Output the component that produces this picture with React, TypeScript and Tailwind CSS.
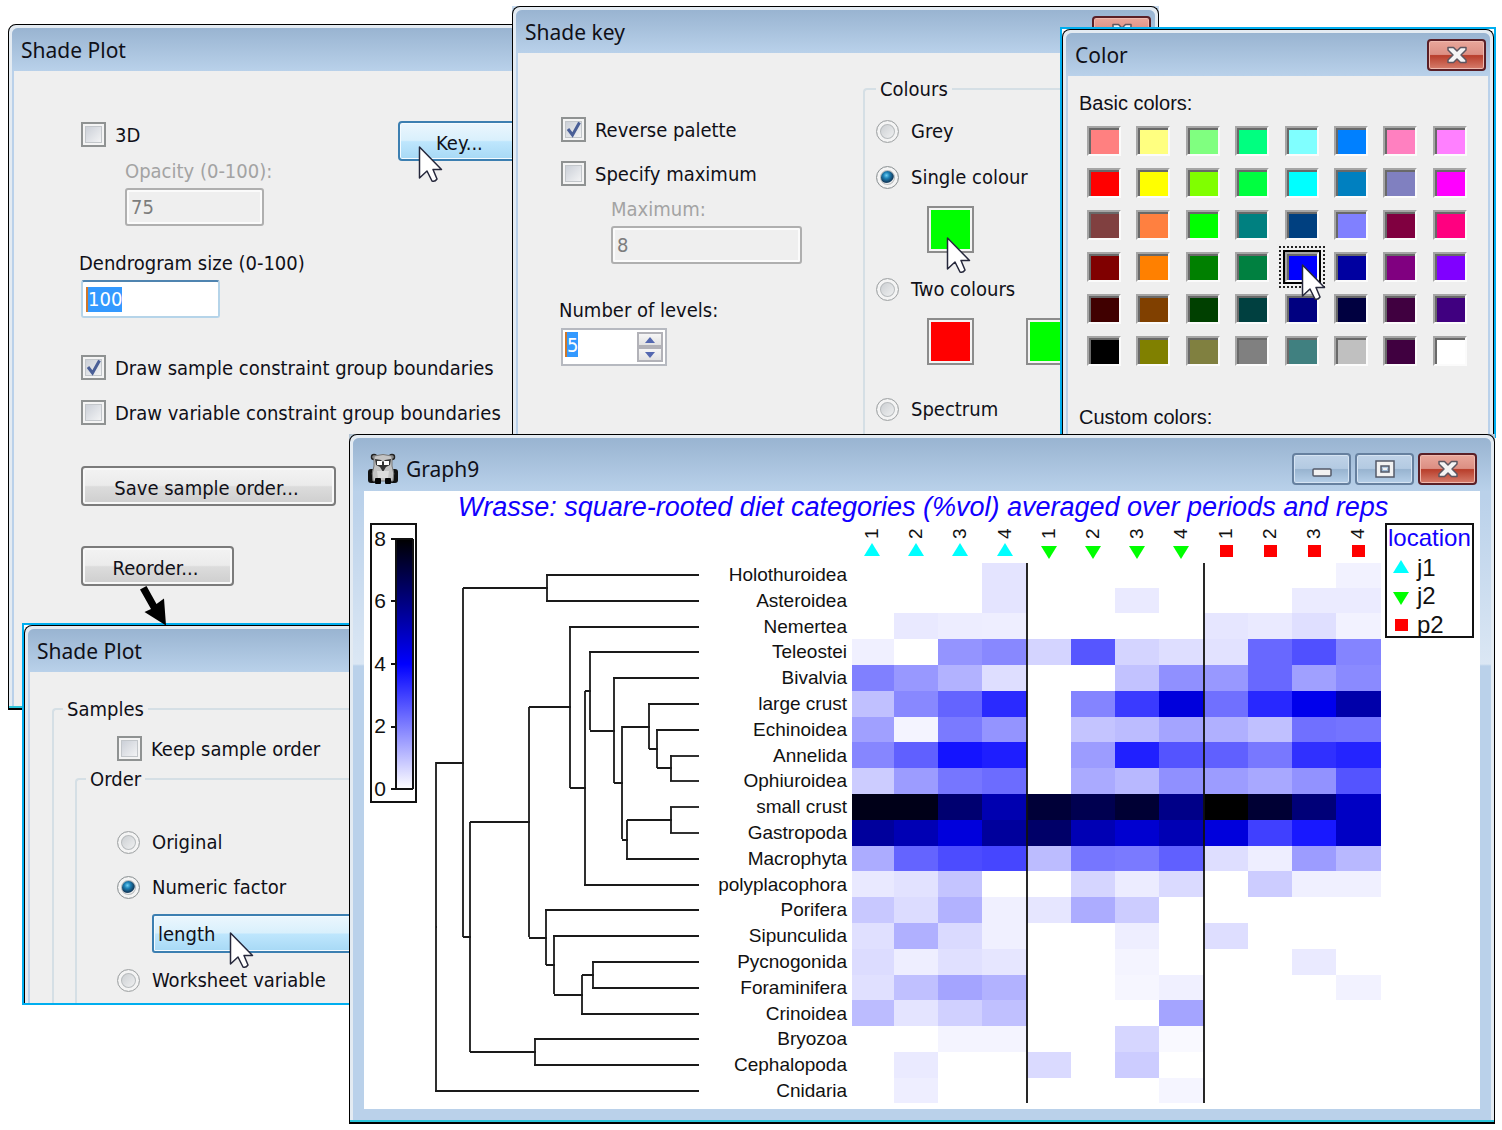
import React from 'react';
import clsx from 'clsx';

type WithChildren = { children?: React.ReactNode };

const App: React.FC = () => (
  <main className="relative min-h-screen overflow-hidden bg-white font-['DejaVu_Sans_Condensed','DejaVu_Sans',sans-serif] text-[20px] leading-6 text-[#101018]">
    <div className="absolute left-[8px] top-[24px] w-[600px]">
      <ShadePlotWindow />
    </div>
    <div className="absolute left-[512px] top-[6px] w-[647px] bg-[#c9dcf0]">
      <ShadeKeyWindow />
    </div>
    <div className="absolute left-[1060px] right-[6px] top-[27px] border-2 border-[#00aeef] bg-white">
      <ColorWindow />
    </div>
    <div className="absolute left-[22px] top-[623px] w-[400px] border-2 border-[#00aeef] bg-white">
      <ReorderWindow />
    </div>
    <div className="absolute left-[349px] right-[7px] top-[434px] bg-[#b4c4d4]">
      <GraphWindow />
    </div>
    <svg className="absolute left-[138px] top-[584px] h-[42px] w-[32px]" viewBox="0 0 32 42" aria-hidden="true">
      <path d="M2 5.500L8.500 2L18.500 20L26 14.500L28 41.500L6.500 28L13 25Z" fill="#000" />
    </svg>
    <Cursor className="left-[418px] top-[145px]" />
    <Cursor className="left-[946px] top-[236px]" />
    <Cursor className="left-[1301px] top-[263px]" />
    <Cursor className="left-[229px] top-[931px]" />
  </main>
);

/* Window chrome */

interface WindowProps extends WithChildren {
  title: string;
  icon?: React.ReactNode;
  controls?: React.ReactNode;
  thick?: boolean;
  footer?: boolean;
}

const Window: React.FC<WindowProps> = ({ title, icon, controls, thick, footer, children }) => (
  <section className={clsx('rounded-t-lg border border-b-0 border-black bg-[#e4ebf2]', footer && 'border-b-2')}>
    <div
      className={clsx(
        'm-[3px] mb-0 rounded-t-md bg-[#bad1ea]',
        thick ? 'bg-[linear-gradient(to_bottom,#bad1ea_0px,#bad1ea_60px,#dbe7f4_226px,#bad1ea_228px)] px-[11px]' : 'px-[2px]',
      )}
    >
      <header
        className={clsx(
          'flex items-center justify-between rounded-t-md bg-linear-to-b from-[#99b4d1] to-[#b9d1ea]',
          thick ? '-mx-[11px] h-[53px] pl-[15px] pr-[14px] pt-2' : '-mx-[2px] h-[43px] pl-[9px] pr-[4px]',
        )}
      >
        <h2 className="flex items-center gap-2 font-['Noto_Sans',sans-serif] text-[21px]">
          {icon}
          {title}
        </h2>
        <div className="flex gap-1">{controls}</div>
      </header>
      <div className={thick ? 'bg-white' : 'bg-[#efefef]'}>{children}</div>
      {thick && <div className="h-[11px]" />}
    </div>
    {footer && <div className="h-[2px] bg-[#2cc3d8]" />}
  </section>
);

const CloseButton = () => (
  <button
    aria-label="Close"
    className="flex h-[32px] w-[59px] items-center justify-center rounded-[4px] border-2 border-[#5a1f26] bg-[linear-gradient(#e9a79b,#dc8f83_48%,#b83e2b_52%,#d67d6c)] shadow-[inset_0_0_0_1px_#efb9ae]"
  >
    <svg className="h-[18px] w-[22px]" viewBox="0 0 22 18" aria-hidden="true">
      <path
        d="M2 1.500H7.500L11 5L14.500 1.500H20V4L15 9L20 14V16.500H14.500L11 13L7.500 16.500H2V14L7 9L2 4Z"
        fill="#f4f4f4"
        stroke="#5d5660"
        strokeWidth="1.500"
        strokeLinejoin="round"
      />
    </svg>
  </button>
);

const CaptionButton: React.FC<WithChildren & { label: string }> = ({ label, children }) => (
  <button
    aria-label={label}
    className="flex h-[32px] w-[59px] items-center justify-center rounded-[4px] border-2 border-[#66809f] bg-[linear-gradient(#c0d3e8,#b3cae2_48%,#98b4d0_52%,#b6cfe8)] shadow-[inset_0_0_0_1px_#d6e4f3]"
  >
    <svg className="h-[20px] w-[22px]" viewBox="0 0 22 20" fill="#f2f2f2" stroke="#545a68" strokeWidth="1.500" aria-hidden="true">
      {children}
    </svg>
  </button>
);

const PandaIcon = () => (
  <svg className="h-[32px] w-[30px]" viewBox="0 0 30 32" aria-hidden="true">
    <rect x="0" y="16" width="9" height="14" rx="3" fill="#111" />
    <rect x="21" y="16" width="9" height="14" rx="3" fill="#111" />
    <circle cx="6" cy="4" r="2.500" fill="#999" stroke="#222" strokeWidth="1.500" />
    <circle cx="24" cy="4" r="2.500" fill="#999" stroke="#222" strokeWidth="1.500" />
    <path d="M6 3Q15 0 24 3L24 13Q27 20 25 28H5Q3 20 6 13Z" fill="#c4c4c4" stroke="#777" />
    <path d="M7 6L13 7L15 9L17 7L23 6L22 12L18 14H12L8 12Z" fill="#333" />
    <rect x="9" y="8" width="5" height="4" fill="#fff" />
    <rect x="16" y="8" width="5" height="4" fill="#fff" />
    <path d="M12 14H18L15 19Z" fill="#333" />
    <path d="M9 18H21L20 25H10Z" fill="#dcdcdc" />
    <rect x="7" y="25" width="6" height="6" rx="1" fill="#050505" />
    <rect x="17" y="25" width="6" height="6" rx="1" fill="#050505" />
  </svg>
);

const Cursor: React.FC<{ className: string }> = ({ className }) => (
  <svg className={clsx('pointer-events-none absolute h-[38px] w-[26px]', className)} viewBox="-1 -1 26 38" aria-hidden="true">
    <path
      d="M0.500 1V32L8 25L13 35Q16 36 18 33L14 23.500H22.500Z"
      fill="#fff"
      stroke="#26283c"
      strokeWidth="1.500"
      strokeLinejoin="round"
    />
  </svg>
);

/* Form controls */

const Checkbox: React.FC<{ label: string; checked?: boolean }> = ({ label, checked }) => (
  <label className="flex h-[26px] items-center gap-[9px] whitespace-nowrap">
    <span className="relative size-[25px]">
      <input
        type="checkbox"
        defaultChecked={checked}
        className="peer block size-[25px] appearance-none border-2 border-[#8f9292] bg-linear-to-br from-[#c4c9d2] to-[#fafafa] shadow-[inset_0_0_0_2px_#f4f4f4,inset_0_0_0_3px_#c2c6ca]"
      />
      <svg className="pointer-events-none absolute inset-0 hidden peer-checked:block" viewBox="0 0 25 25" aria-hidden="true">
        <path d="M7 12L11.500 18L18.500 5.500" fill="none" stroke="#4a5f97" strokeWidth="3" />
      </svg>
    </span>
    <span className="pt-[2px]">{label}</span>
  </label>
);

const Radio: React.FC<{ name: string; label: string; checked?: boolean }> = ({ name, label, checked }) => (
  <label className="flex h-6 items-center gap-3 whitespace-nowrap">
    <input
      type="radio"
      name={name}
      defaultChecked={checked}
      className="size-[23px] appearance-none rounded-full border border-[#a2a5a6] bg-linear-to-br from-[#c2c6ca] to-[#fafafa] shadow-[inset_0_0_0_3px_#f4f4f4,inset_0_0_0_4px_#b8bcbe] checked:border-[#8e9496] checked:bg-[radial-gradient(circle_at_45%_40%,#6fd0f5_0px,#1f83b8_3px,#123a5c_7px,#f0f0f0_8px)]"
    />
    {label}
  </label>
);

const PushButton: React.FC<WithChildren & { className: string }> = ({ className, children }) => (
  <button
    className={clsx(
      'block h-[40px] whitespace-nowrap rounded-[4px] border-2 border-[#7b7b7b] bg-[linear-gradient(#f3f3f3,#ebebeb_48%,#dcdcdc_52%,#cecece)] pt-[3px] text-center shadow-[inset_0_0_0_2px_#f8f8f8]',
      className,
    )}
  >
    {children}
  </button>
);

const DisabledField: React.FC<{ id: string; label: string; value: string; className: string }> = ({ id, label, value, className }) => (
  <div className="flex flex-col gap-[5px] text-[#a3a3a3]">
    <label htmlFor={id}>{label}</label>
    <input
      id={id}
      disabled
      defaultValue={value}
      className={clsx('h-[38px] rounded-[3px] border-2 border-[#afafaf] bg-[#efefef] px-1 text-[#7d7d7d] shadow-[inset_0_0_0_2px_#fbfbfb]', className)}
    />
  </div>
);

const ColourSwatch: React.FC<{ label: string; className: string }> = ({ label, className }) => (
  <button
    aria-label={label}
    className={clsx('h-[47px] w-[47px] border-2 border-[#8c8c8c] shadow-[inset_0_0_0_2px_#f4f4f4]', className)}
  />
);

/* Dialogs */

const ShadePlotWindow = () => (
  <Window title="Shade Plot" footer>
    <div className="flex flex-col pb-[120px] pl-[67px] pt-[50px]">
      <div className="flex">
        <div className="w-[317px]">
          <Checkbox label="3D" />
        </div>
        <button className="h-[40px] w-[152px] rounded-[4px] border-2 border-[#3c7fb1] bg-[linear-gradient(#ebf6fd,#d9f0fc_48%,#bee6fd_52%,#a7d9f5)] pl-9 pt-[3px] text-left shadow-[inset_0_0_0_1px_#f4fbff]">
          Key...
        </button>
      </div>
      <div className="-mt-[2px] pl-[44px]">
        <DisabledField id="opacity" label="Opacity (0-100):" value="75" className="w-[139px]" />
      </div>
      <label htmlFor="dendrogram-size" className="-ml-[2px] mt-[25px]">
        Dendrogram size (0-100)
      </label>
      <div className="mt-[5px] flex h-[38px] w-[139px] items-center rounded-[3px] border-2 border-[#b5d4e9] border-t-[#4f84b0] bg-white px-[3px]">
        <input
          id="dendrogram-size"
          defaultValue="100"
          className="field-sizing-content h-[25px] border-l-2 border-[#d0782a] bg-[#3399ff] text-white outline-none"
        />
      </div>
      <div className="mt-[36px] flex flex-col gap-[19px]">
        <Checkbox label="Draw sample constraint group boundaries" checked />
        <Checkbox label="Draw variable constraint group boundaries" />
      </div>
      <div className="mt-[41px] flex flex-col gap-[40px]">
        <PushButton className="w-[255px] pr-1">Save sample order...</PushButton>
        <PushButton className="w-[153px] pr-1">Reorder...</PushButton>
      </div>
    </div>
  </Window>
);

const ShadeKeyWindow = () => (
  <Window title="Shade key" controls={<CloseButton />}>
    <div className="flex h-[400px] pl-[43px]">
      <div className="flex w-[302px] flex-col pt-[63px]">
        <div className="flex flex-col gap-[18px]">
          <Checkbox label="Reverse palette" checked />
          <Checkbox label="Specify maximum" />
        </div>
        <div className="mt-[11px] pl-[50px]">
          <DisabledField id="maximum" label="Maximum:" value="8" className="w-[191px]" />
        </div>
        <label htmlFor="levels" className="-ml-[2px] mt-[34px]">
          Number of levels:
        </label>
        <div className="mt-[6px] flex h-[38px] w-[106px] items-start justify-between border-2 border-[#b6b9c0] bg-white p-[2px]">
          <input
            id="levels"
            defaultValue="5"
            className="field-sizing-content h-[25px] border-l-2 border-[#d0782a] bg-[#3399ff] text-white outline-none"
          />
          <div className="flex h-full flex-col">
            <SpinButton label="Increase" path="M5 0L10 6H0Z" />
            <SpinButton label="Decrease" path="M0 0H10L5 6Z" />
          </div>
        </div>
      </div>
      <fieldset className="mt-[24px] h-[376px] flex-1 rounded-tl-[4px] border-l-2 border-t-2 border-[#d5dfe5] pl-[11px]">
        <legend className="px-1 text-[20px]">Colours</legend>
        <div className="flex flex-col pt-[18px]">
          <Radio name="colours" label="Grey" />
          <div className="mt-[22px]">
            <Radio name="colours" label="Single colour" checked />
          </div>
          <div className="mt-[17px] flex pl-[51px]">
            <ColourSwatch label="Single" className="bg-[#00ff00]" />
          </div>
          <div className="mt-[24px]">
            <Radio name="colours" label="Two colours" />
          </div>
          <div className="mt-[17px] flex gap-[52px] pl-[51px]">
            <ColourSwatch label="First" className="bg-[#ff0000]" />
            <ColourSwatch label="Second" className="bg-[#00ff00]" />
          </div>
          <div className="mt-[32px]">
            <Radio name="colours" label="Spectrum" />
          </div>
        </div>
      </fieldset>
    </div>
  </Window>
);

const SpinButton: React.FC<{ label: string; path: string }> = ({ label, path }) => (
  <button
    aria-label={label}
    className="flex h-[15px] w-[26px] items-center justify-center border-2 border-[#b2b2b8] bg-linear-to-b from-[#f6f6f6] to-[#e2e2e2]"
  >
    <svg className="h-[6px] w-[10px]" viewBox="0 0 10 6" aria-hidden="true">
      <path d={path} fill="#5468b0" />
    </svg>
  </button>
);

const basicColors = [
  ['#ff8080', '#ffff80', '#80ff80', '#00ff80', '#80ffff', '#0080ff', '#ff80c0', '#ff80ff'],
  ['#ff0000', '#ffff00', '#80ff00', '#00ff40', '#00ffff', '#0080c0', '#8080c0', '#ff00ff'],
  ['#804040', '#ff8040', '#00ff00', '#008080', '#004080', '#8080ff', '#800040', '#ff0080'],
  ['#800000', '#ff8000', '#008000', '#008040', '#0000ff', '#0000a0', '#800080', '#8000ff'],
  ['#400000', '#804000', '#004000', '#004040', '#000080', '#000040', '#400040', '#400080'],
  ['#000000', '#808000', '#808040', '#808080', '#408080', '#c0c0c0', '#400040', '#ffffff'],
];

const ColorWindow = () => (
  <Window title="Color" controls={<CloseButton />}>
    <div className="flex h-[360px] flex-col pl-[11px] pt-[15px] font-['Liberation_Sans',Arial,sans-serif]">
      <h3>Basic colors:</h3>
      <div className="mt-[11px] grid grid-cols-8 gap-y-[12px] pl-[8px] pr-[6px]">
        {basicColors.flat().map((color, i) => (
          <button
            key={i}
            aria-label={color}
            style={{ backgroundColor: color }}
            className={clsx(
              'h-[30px] w-[34px] border-2 border-[#fbfbfb] border-l-[#a6a6a6] border-t-[#a6a6a6] shadow-[inset_1px_1px_0_1px_#696969]',
              color === '#0000ff' && 'outline-2 outline-offset-[4px] outline-dotted outline-[#222] ring-2 ring-black',
            )}
          />
        ))}
      </div>
      <h3 className="mt-[39px]">Custom colors:</h3>
    </div>
  </Window>
);

const ReorderWindow = () => (
  <Window title="Shade Plot">
    <div className="pl-[22px] pt-[25px]">
      <fieldset className="rounded-tl-[4px] border-l-2 border-t-2 border-[#d5dfe5] pl-[21px]">
        <legend className="-ml-[12px] px-1 text-[20px]">Samples</legend>
        <div className="pl-[42px] pt-[14px]">
          <Checkbox label="Keep sample order" />
        </div>
        <fieldset className="mt-[6px] rounded-tl-[4px] border-l-2 border-t-2 border-[#d5dfe5] pb-[11px] pl-[9px]">
          <legend className="px-1 text-[20px]">Order</legend>
          <div className="flex flex-col pl-[31px] pt-[39px]">
            <Radio name="order" label="Original" />
            <div className="mt-[21px]">
              <Radio name="order" label="Numeric factor" checked />
            </div>
            <select
              aria-label="Numeric factor"
              className="ml-[35px] mt-[15px] h-[39px] w-[260px] appearance-none rounded-[3px] border-2 border-[#3c7fb1] bg-[linear-gradient(#ebf6fd,#d9f0fc_48%,#bee6fd_52%,#a7d9f5)] px-1 shadow-[inset_0_0_0_1px_#f4fbff]"
            >
              <option>length</option>
            </select>
            <div className="mt-[15px]">
              <Radio name="order" label="Worksheet variable" />
            </div>
          </div>
        </fieldset>
      </fieldset>
    </div>
  </Window>
);

/* Shade plot graph */

// depth of shade: 0 is white, 255 is full blue, 510 is black
const taxa: [string, number[]][] = [
  ['Holothuroidea', [0, 0, 0, 27, 0, 0, 0, 0, 0, 0, 0, 13]],
  ['Asteroidea', [0, 0, 0, 27, 0, 0, 21, 0, 0, 0, 20, 20]],
  ['Nemertea', [0, 22, 18, 17, 0, 0, 0, 0, 25, 21, 32, 13]],
  ['Teleostei', [15, 0, 107, 119, 43, 169, 43, 33, 29, 151, 175, 123]],
  ['Bivalvia', [127, 103, 77, 33, 0, 0, 61, 111, 103, 151, 95, 117]],
  ['large crust', [63, 119, 155, 213, 0, 123, 197, 290, 143, 215, 274, 340]],
  ['Echinoidea', [95, 11, 133, 107, 0, 59, 67, 91, 79, 63, 143, 139]],
  ['Annelida', [121, 159, 235, 225, 0, 99, 223, 171, 159, 135, 207, 219]],
  ['Ophiuroidea', [51, 99, 137, 147, 0, 85, 71, 111, 99, 87, 109, 171]],
  ['small crust', [486, 486, 398, 334, 454, 430, 458, 374, 510, 458, 390, 314]],
  ['Gastropoda', [354, 330, 290, 354, 406, 330, 302, 330, 290, 191, 231, 314]],
  ['Macrophyta', [83, 155, 179, 185, 67, 137, 133, 159, 33, 17, 99, 71]],
  ['polyplacophora', [22, 29, 59, 0, 0, 42, 19, 37, 0, 51, 15, 15]],
  ['Porifera', [55, 35, 77, 15, 25, 83, 51, 0, 0, 0, 0, 0]],
  ['Sipunculida', [31, 79, 37, 15, 0, 0, 17, 0, 33, 0, 0, 0]],
  ['Pycnogonida', [35, 17, 31, 25, 0, 0, 11, 0, 0, 0, 21, 0]],
  ['Foraminifera', [31, 63, 91, 77, 0, 0, 9, 15, 0, 0, 0, 13]],
  ['Crinoidea', [67, 27, 47, 63, 0, 0, 0, 91, 0, 0, 0, 0]],
  ['Bryozoa', [0, 0, 11, 11, 0, 0, 41, 6, 0, 0, 0, 0]],
  ['Cephalopoda', [0, 21, 0, 0, 37, 0, 51, 0, 0, 0, 0, 0]],
  ['Cnidaria', [0, 17, 0, 0, 0, 0, 0, 10, 0, 0, 0, 0]],
];

const colEdges = [852, 894, 938, 982, 1027, 1071, 1115, 1159, 1204, 1248, 1292, 1336, 1381];
const rowEdges = [563, 588, 613, 639, 665, 691, 717, 742, 768, 794, 820, 846, 871, 897, 923, 949, 975, 1000, 1026, 1052, 1078, 1103];
const markerX = [872, 916, 960, 1005, 1049, 1093, 1137, 1181, 1226, 1270, 1314, 1358];

const shade = (d: number) => (d <= 255 ? `rgb(${255 - d},${255 - d},255)` : `rgb(0,0,${510 - d})`);
const leafY = (row: number) => Math.round(575 + row * 25.8);

// each join: x, upper y, lower y, and the x of its parent
const joins = [
  [547, 575, 601, 463],
  [671, 755, 781, 657],
  [657, 730, 768, 649],
  [649, 704, 749, 622],
  [671, 807, 833, 627],
  [627, 820, 859, 622],
  [622, 726, 839, 614],
  [614, 678, 783, 590],
  [590, 652, 730, 585],
  [585, 691, 885, 570],
  [570, 626, 788, 529],
  [593, 962, 988, 582],
  [582, 975, 1014, 554],
  [554, 936, 994, 546],
  [546, 910, 965, 529],
  [529, 707, 937, 470],
  [535, 1039, 1065, 470],
  [470, 822, 1052, 463],
  [463, 588, 937, 436],
  [436, 762, 1091, 436],
];
const leafStarts = [547, 547, 570, 590, 614, 649, 657, 671, 671, 671, 671, 627, 585, 546, 554, 593, 593, 582, 535, 535, 436];

const Marker: React.FC<{ group: number; x: number; y: number }> = ({ group, x, y }) => {
  if (group === 0) return <path d={`M${x} ${y - 7}L${x + 8} ${y + 6}H${x - 8}Z`} fill="#00ffff" />;
  if (group === 1) return <path d={`M${x} ${y + 9}L${x + 8} ${y - 4}H${x - 8}Z`} fill="#00ff00" />;
  return <rect x={x - 6} y={y - 5} width="13" height="12" fill="#ff0000" />;
};

const ShadeChart = () => (
  <svg className="block w-full font-['Liberation_Sans',Arial,sans-serif]" viewBox="364 491 1116 618" role="img" aria-label="Shade plot">
    <defs>
      <linearGradient id="scale" x1="0" y1="0" x2="0" y2="1">
        <stop offset="0" stopColor="#000" />
        <stop offset="0.5" stopColor="#00f" />
        <stop offset="1" stopColor="#fff" />
      </linearGradient>
    </defs>

    <text x="923" y="516" textAnchor="middle" fontSize="27" fontStyle="italic" fill="#1200ff">
      Wrasse: square-rooted diet categories (%vol) averaged over periods and reps
    </text>

    <g fill="none" stroke="#111" strokeWidth="2">
      <rect x="371" y="524" width="45" height="278" />
      <rect x="396" y="539" width="17" height="250" fill="url(#scale)" stroke="none" />
      <path d="M391 539H413M396 539V789M413 539V789M391 601H396M391 664H396M391 727H396M391 789H413" />
    </g>
    {[8, 6, 4, 2, 0].map((n, i) => (
      <text key={n} x="386" y={546 + Math.round(i * 62.4)} textAnchor="end" fontSize="21" fill="#111">
        {n}
      </text>
    ))}

    <g fill="none" stroke="#1a1a1a" strokeWidth="1.8">
      {joins.map(([x, top, bottom, parent], i) => (
        <path key={i} d={`M${x} ${top}V${bottom}M${x + 1} ${Math.round((top + bottom) / 2)}H${parent}`} />
      ))}
      {leafStarts.map((x, i) => (
        <path key={i} d={`M${x - 1} ${leafY(i)}H699`} />
      ))}
    </g>

    {taxa.map(([name, depths], row) => (
      <g key={name}>
        <text x="847" y={leafY(row) + 6} textAnchor="end" fontSize="19" fill="#111">
          {name}
        </text>
        {depths.map((d, col) =>
          d === 0 ? null : (
            <rect
              key={col}
              x={colEdges[col]}
              y={rowEdges[row]}
              width={colEdges[col + 1] - colEdges[col]}
              height={rowEdges[row + 1] - rowEdges[row]}
              fill={shade(d)}
              shapeRendering="crispEdges"
            />
          ),
        )}
      </g>
    ))}
    <path d="M1027 563V1103M1204 563V1103" stroke="#111" strokeWidth="1.8" />

    {markerX.map((x, i) => (
      <g key={x}>
        <text transform={`translate(${x + 6} 539) rotate(-90)`} fontSize="19" fill="#111">
          {(i % 4) + 1}
        </text>
        <Marker group={Math.floor(i / 4)} x={x} y={550} />
      </g>
    ))}

    <rect x="1386" y="524" width="87" height="113" fill="#fff" stroke="#111" strokeWidth="2" />
    <text x="1388" y="546" fontSize="24" fill="#1200ff">
      location
    </text>
    {['j1', 'j2', 'p2'].map((name, i) => (
      <g key={name}>
        <Marker group={i} x={1401} y={[567, 596, 624][i]} />
        <text x="1417" y={[576, 604, 633][i]} fontSize="24" fill="#111">
          {name}
        </text>
      </g>
    ))}
  </svg>
);

const GraphWindow = () => (
  <Window
    title="Graph9"
    icon={<PandaIcon />}
    thick
    footer
    controls={
      <>
        <CaptionButton label="Minimize">
          <rect x="2" y="10" width="18" height="7" rx="1" />
        </CaptionButton>
        <CaptionButton label="Maximize">
          <path fillRule="evenodd" d="M2 2H20V18H2ZM7 7H15V13H7Z" />
          <rect x="9" y="9" width="4" height="2" stroke="none" />
        </CaptionButton>
        <CloseButton />
      </>
    }
  >
    <ShadeChart />
  </Window>
);

export default App;
